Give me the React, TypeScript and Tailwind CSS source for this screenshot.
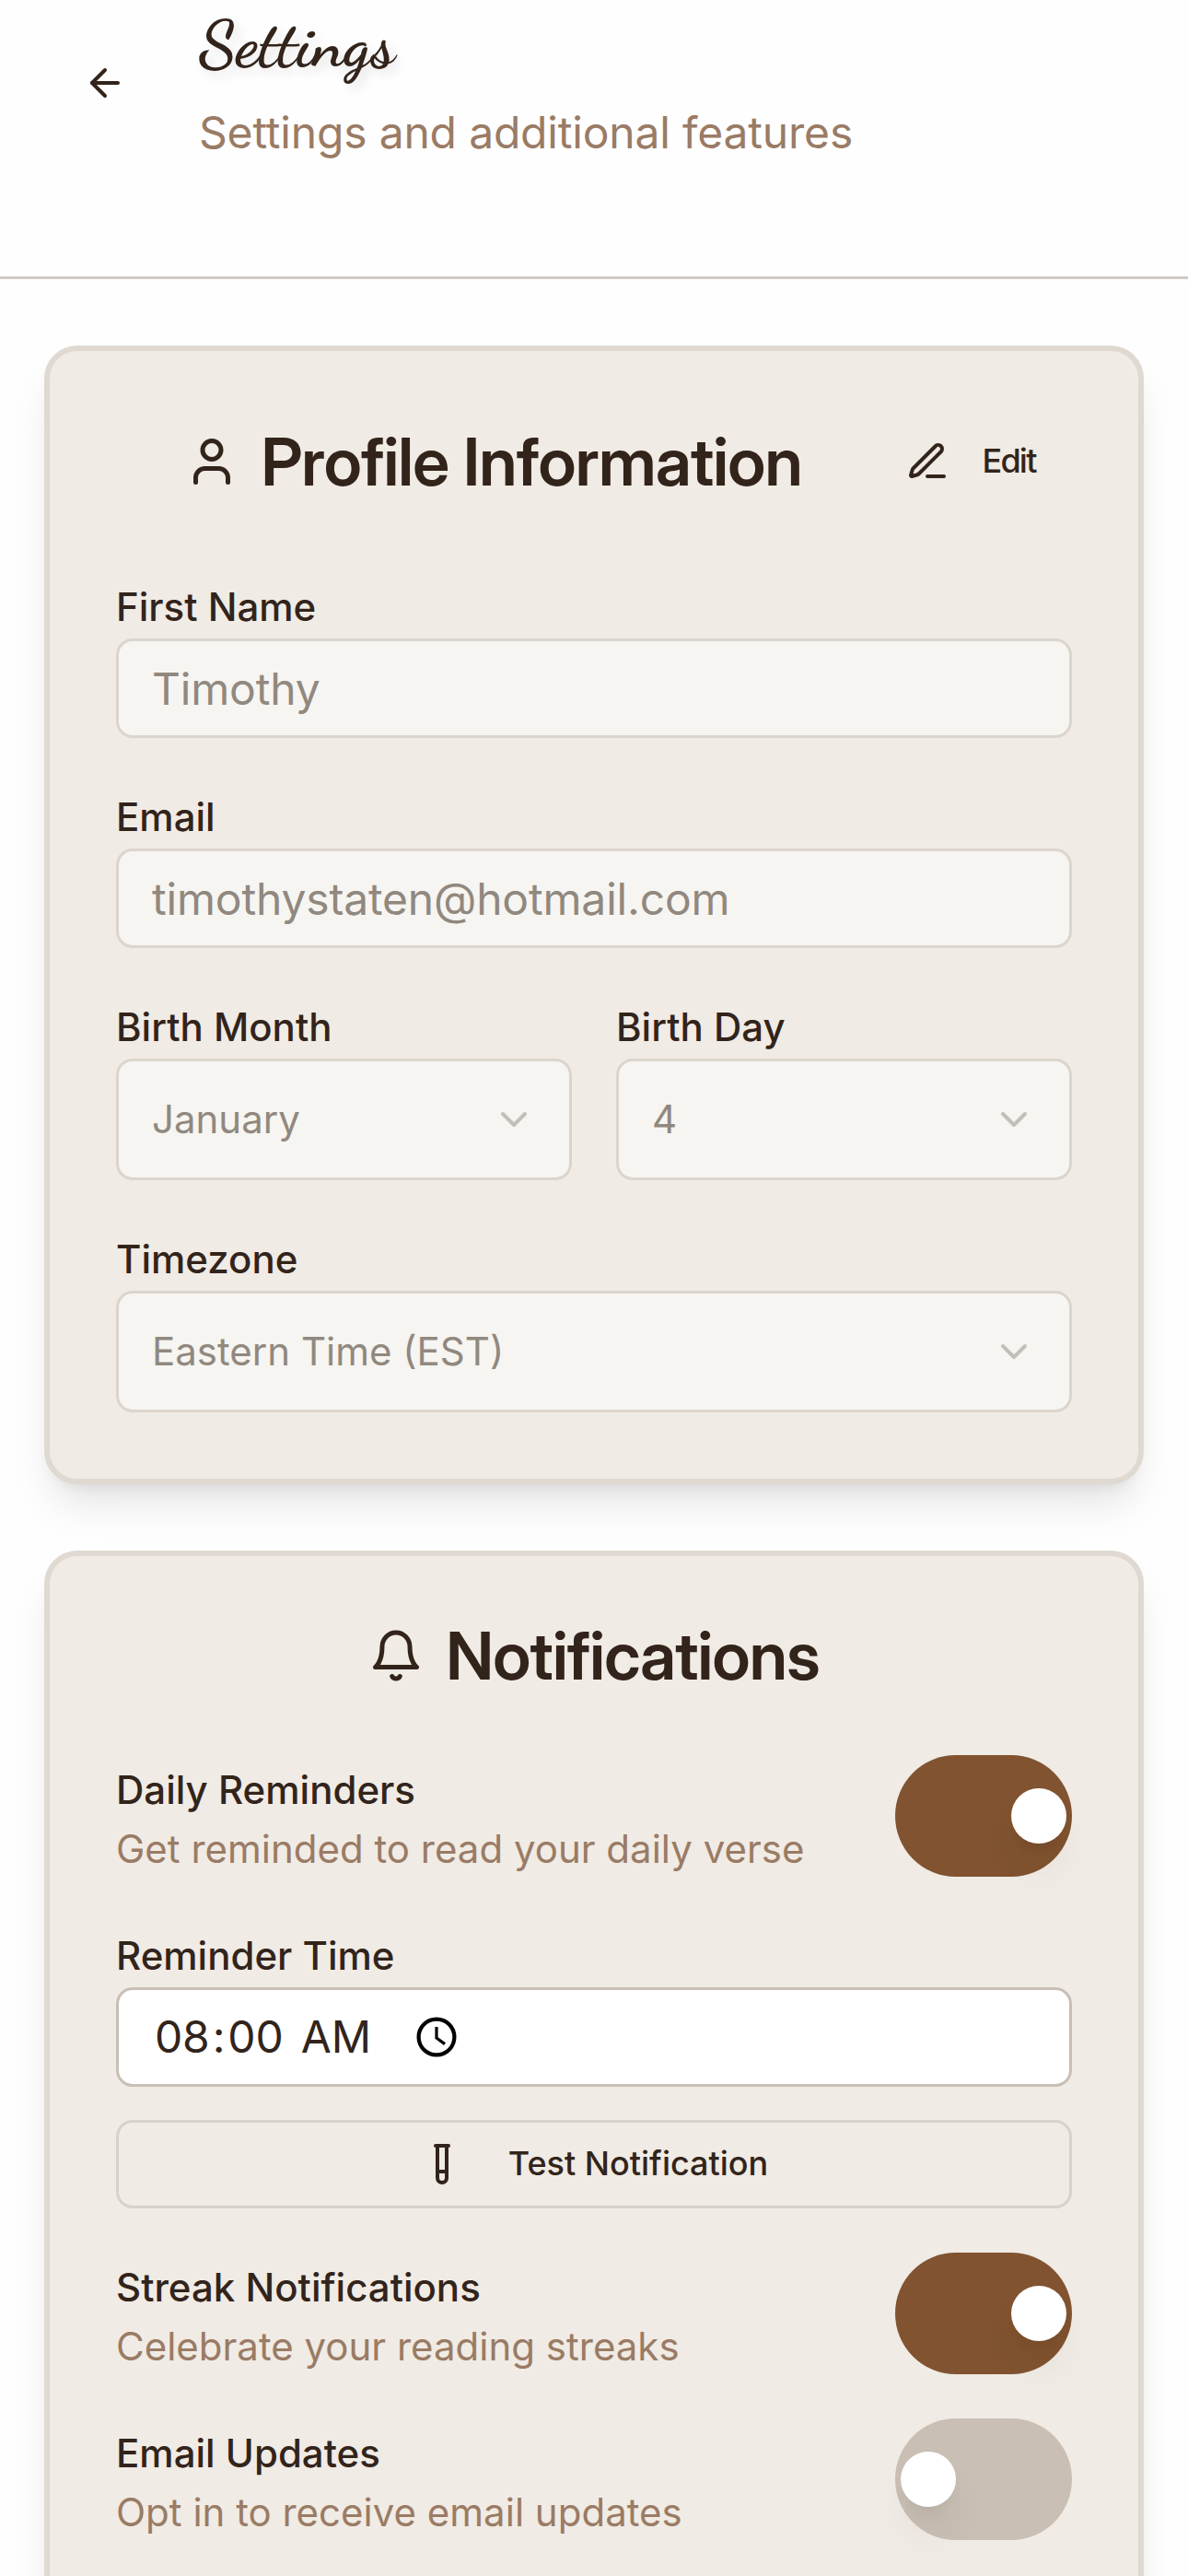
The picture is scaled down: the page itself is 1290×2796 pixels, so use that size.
import type { ReactNode } from 'react';

const SHADOW =
  'shadow-[0_30px_45px_-9px_rgba(0,0,0,0.1),0_12px_18px_-12px_rgba(0,0,0,0.1)]';

function Icon({ className, children }: { className: string; children: ReactNode }) {
  return (
    <svg
      viewBox="0 0 24 24"
      fill="none"
      stroke="currentColor"
      strokeWidth={2}
      strokeLinecap="round"
      strokeLinejoin="round"
      className={`shrink-0 ${className}`}
    >
      {children}
    </svg>
  );
}

function Label({ children }: { children: ReactNode }) {
  return (
    <div className="h-[72px] text-[48px] leading-[72px]">
      <label className="text-[42px] font-medium">{children}</label>
    </div>
  );
}

function TextField({ label, value }: { label: string; value: string }) {
  return (
    <div>
      <Label>{label}</Label>
      <div className="flex h-[108px] items-center rounded-[18px] border-3 border-[#dcd5cd] bg-[#f6f5f1] px-9 pt-0.5 text-[48px] leading-[72px] tracking-[-0.18px] text-[#91887f]">
        {value}
      </div>
    </div>
  );
}

function SelectField({ label, value }: { label: string; value: string }) {
  return (
    <div className="flex-1">
      <Label>{label}</Label>
      <div className="flex h-[132px] items-center justify-between rounded-[18px] border-3 border-[#dcd5cd] bg-[#f6f5f1] px-9 text-[42px] leading-[60px] text-[#91887f]">
        <span>{value}</span>
        <Icon className="size-12 text-[#c4beb8]">
          <path d="m6 9 6 6 6-6" />
        </Icon>
      </div>
    </div>
  );
}

function ToggleRow({ title, text, on }: { title: string; text: string; on: boolean }) {
  return (
    <div className="flex h-[132px] items-center justify-between">
      <div>
        <Label>{title}</Label>
        <p className="text-[42px] leading-[60px] text-[#9a7b65]">{text}</p>
      </div>
      <div
        className={`flex h-[132px] w-48 items-center rounded-full px-1.5 ${
          on ? 'justify-end bg-[#815330]' : 'justify-start bg-[#c9bfb4]'
        }`}
      >
        <div className={`size-15 rounded-full bg-white ${SHADOW}`} />
      </div>
    </div>
  );
}

export default function App() {
  return (
    <div className="h-[2796px] overflow-hidden bg-[#fefefe] font-['Inter',sans-serif] text-[#32241b]">
      <header className="flex h-[303px] items-start gap-9 border-b-3 border-[#d1cac5] px-12">
        <button className="mt-6 flex size-[132px] items-center justify-center">
          <Icon className="size-12">
            <path d="m12 19-7-7 7-7" />
            <path d="M19 12H5" />
          </Icon>
        </button>
        <div>
          <h1 className="h-[108px] font-['Dancing_Script',cursive] text-[72px] leading-[96px] font-bold [text-shadow:6px_6px_12px_rgba(0,0,0,0.1)]">
            Settings
          </h1>
          <p className="text-[48px] leading-[72px] tracking-[-0.18px] text-[#9a7b65]">
            Settings and additional features
          </p>
        </div>
      </header>

      <main className="flex flex-col gap-[72px] px-12 pt-[72px]">
        <section className={`rounded-[36px] border-6 border-[#dfd9d1] bg-[#f0ebe4] p-[72px] ${SHADOW}`}>
          <div className="flex h-24 items-center pl-[73.5px]">
            <Icon className="size-15">
              <path d="M19 21v-2a4 4 0 0 0-4-4H9a4 4 0 0 0-4 4v2" />
              <circle cx="12" cy="7" r="4" />
            </Icon>
            <h2 className="ml-6 w-[585px] font-['Inter_Display','Inter',sans-serif] text-[72px] leading-[72px] font-semibold tracking-[-0.75px] whitespace-nowrap">
              Profile Information
            </h2>
            <button className="ml-[114px] flex items-center gap-9 text-[36px] leading-[48px] font-medium tracking-[-1.8px]">
              <Icon className="size-12">
                <path d="M12 20h9" />
                <path d="M16.376 3.622a1 1 0 0 1 3.002 3.002L7.368 18.635a2 2 0 0 1-.855.506l-2.872.838a.5.5 0 0 1-.62-.62l.838-2.872a2 2 0 0 1 .506-.854z" />
              </Icon>
              <span className="pb-0.5">Edit</span>
            </button>
          </div>
          <div className="mt-[72px] flex flex-col gap-12">
            <TextField label="First Name" value="Timothy" />
            <TextField label="Email" value="timothystaten@hotmail.com" />
            <div className="flex gap-12">
              <SelectField label="Birth Month" value="January" />
              <SelectField label="Birth Day" value="4" />
            </div>
            <SelectField label="Timezone" value="Eastern Time (EST)" />
          </div>
        </section>

        <section className={`rounded-[36px] border-6 border-[#dfd9d1] bg-[#f0ebe4] p-[72px] ${SHADOW}`}>
          <div className="flex items-center justify-center gap-6">
            <Icon className="size-15">
              <path d="M6 8a6 6 0 0 1 12 0c0 7 3 9 3 9H3s3-2 3-9" />
              <path d="M10.3 21a1.94 1.94 0 0 0 3.4 0" />
            </Icon>
            <h2 className="font-['Inter_Display','Inter',sans-serif] text-[72px] leading-[72px] font-semibold tracking-[-0.8px]">
              Notifications
            </h2>
          </div>
          <div className="mt-[72px] flex flex-col gap-12">
            <ToggleRow title="Daily Reminders" text="Get reminded to read your daily verse" on />
            <div>
              <Label>Reminder Time</Label>
              <div className="flex h-[108px] items-center rounded-[18px] border-3 border-[#c9bfb4] bg-white px-9 text-[48px] leading-[72px] tracking-[-0.18px]">
                <div className="whitespace-pre">
                  <span className="px-[3px]">08</span>:<span className="px-[3px]">00</span>{' '}
                  <span className="px-[3px]">AM</span>
                </div>
                <svg viewBox="0 0 44 44" fill="none" stroke="#000" className="ml-[46px] size-11">
                  <circle cx="22" cy="22" r="19.4" strokeWidth="4.2" />
                  <path d="M22 11v12l9 6.6" strokeWidth="3.2" />
                </svg>
              </div>
              <button className="mt-9 flex h-24 w-full items-center justify-center gap-12 rounded-[18px] border-3 border-[#d7d2cd] text-[36px] leading-[48px] font-medium">
                <Icon className="size-12">
                  <path d="M14.5 2v17.5c0 1.4-1.1 2.5-2.5 2.5c-1.4 0-2.5-1.1-2.5-2.5V2" />
                  <path d="M8.5 2h7" />
                  <path d="M14.5 16h-5" />
                </Icon>
                <span className="pb-0.5">Test Notification</span>
              </button>
            </div>
            <ToggleRow title="Streak Notifications" text="Celebrate your reading streaks" on />
            <ToggleRow title="Email Updates" text="Opt in to receive email updates" on={false} />
          </div>
        </section>
      </main>
    </div>
  );
}
